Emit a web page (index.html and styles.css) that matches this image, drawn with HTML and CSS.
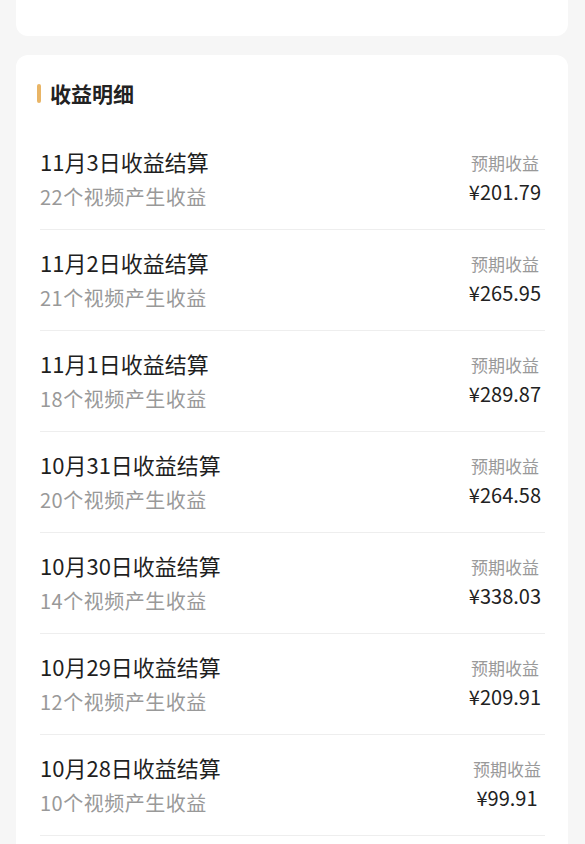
FILE: index.html
```html
<!DOCTYPE html>
<html lang="zh-CN">
<head>
    <meta charset="UTF-8">
    <meta name="viewport" content="width=device-width, initial-scale=1.0">
    <title>收益明细</title>
    <link rel="stylesheet" href="styles.css">
</head>
<body>
    <div class="card card-top"></div>

    <div class="card card-list">
        <h2 class="section-title">收益明细</h2>
        <ul class="income-list">
            <li class="income-row">
                <div class="row-info">
                    <div class="row-title">11月3日收益结算</div>
                    <div class="row-sub">22个视频产生收益</div>
                </div>
                <div class="row-amount">
                    <div class="amount-label">预期收益</div>
                    <div class="amount-value">¥201.79</div>
                </div>
            </li>
            <li class="income-row">
                <div class="row-info">
                    <div class="row-title">11月2日收益结算</div>
                    <div class="row-sub">21个视频产生收益</div>
                </div>
                <div class="row-amount">
                    <div class="amount-label">预期收益</div>
                    <div class="amount-value">¥265.95</div>
                </div>
            </li>
            <li class="income-row">
                <div class="row-info">
                    <div class="row-title">11月1日收益结算</div>
                    <div class="row-sub">18个视频产生收益</div>
                </div>
                <div class="row-amount">
                    <div class="amount-label">预期收益</div>
                    <div class="amount-value">¥289.87</div>
                </div>
            </li>
            <li class="income-row">
                <div class="row-info">
                    <div class="row-title">10月31日收益结算</div>
                    <div class="row-sub">20个视频产生收益</div>
                </div>
                <div class="row-amount">
                    <div class="amount-label">预期收益</div>
                    <div class="amount-value">¥264.58</div>
                </div>
            </li>
            <li class="income-row">
                <div class="row-info">
                    <div class="row-title">10月30日收益结算</div>
                    <div class="row-sub">14个视频产生收益</div>
                </div>
                <div class="row-amount">
                    <div class="amount-label">预期收益</div>
                    <div class="amount-value">¥338.03</div>
                </div>
            </li>
            <li class="income-row">
                <div class="row-info">
                    <div class="row-title">10月29日收益结算</div>
                    <div class="row-sub">12个视频产生收益</div>
                </div>
                <div class="row-amount">
                    <div class="amount-label">预期收益</div>
                    <div class="amount-value">¥209.91</div>
                </div>
            </li>
            <li class="income-row">
                <div class="row-info">
                    <div class="row-title">10月28日收益结算</div>
                    <div class="row-sub">10个视频产生收益</div>
                </div>
                <div class="row-amount">
                    <div class="amount-label">预期收益</div>
                    <div class="amount-value">¥99.91</div>
                </div>
            </li>
        </ul>
    </div>
</body>
</html>
```

FILE: styles.css
```css
body {
    margin: 0;
    padding: 0 17px 0 16px;
    background-color: #f6f6f6;
    font-family: "Noto Sans CJK SC", "Noto Sans", sans-serif;
    color: #222;
}
.card {
    background-color: #fff;
    border-radius: 12px;
    padding: 0 23px 0 24px;
    margin-top: 19px;
}
.card-top {
    height: 36px;
    margin-top: 0;
    border-radius: 0 0 12px 12px;
}
.card-list {
    padding-bottom: 40px;
}
.section-title {
    display: flex;
    align-items: center;
    margin: 0;
    padding: 24px 0 22px;
    font-size: 21px;
    line-height: 28px;
    font-weight: bold;
    color: #222;
}
.section-title::before {
    content: "";
    width: 4px;
    height: 19px;
    margin: 0 9px 0 -3px;
    border-radius: 2px;
    background-color: #e9b566;
}
.income-list {
    list-style: none;
    margin: 0;
    padding: 0;
}
.income-row {
    display: flex;
    justify-content: space-between;
    padding: 18px 0 18px;
    border-bottom: 1px solid #eeeeee;
}
.row-title {
    font-size: 22px;
    line-height: 28px;
    color: #1f1f1f;
}
.row-sub {
    margin-top: 8px;
    font-size: 20px;
    line-height: 28px;
    letter-spacing: 0.5px;
    color: #999;
}
.row-amount {
    display: flex;
    flex-direction: column;
    align-items: center;
    padding-top: 4px;
    margin-right: 4px;
}
.amount-label {
    font-size: 17px;
    line-height: 24px;
    color: #999;
}
.amount-value {
    font-size: 20px;
    line-height: 34px;
    color: #222;
}
```
